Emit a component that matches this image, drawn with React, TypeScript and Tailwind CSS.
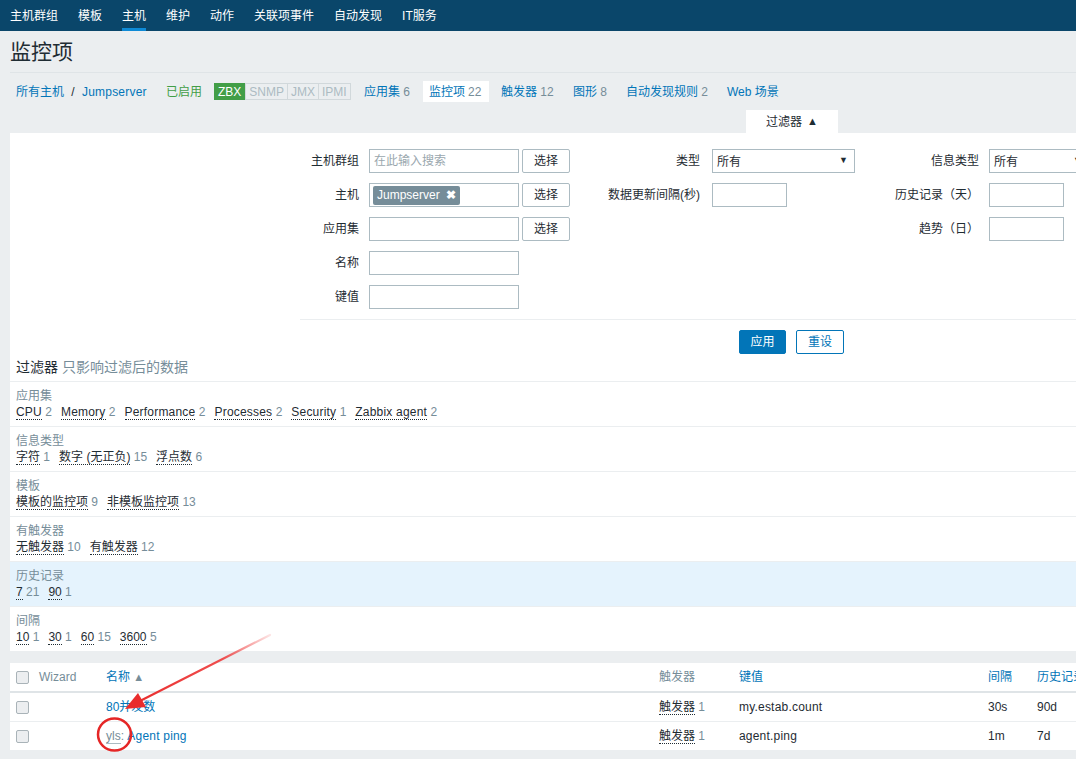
import React from 'react';

const font = "font-['Liberation_Sans','Noto_Sans_CJK_SC',sans-serif]";

const navItems = ['主机群组', '模板', '主机', '维护', '动作', '关联项事件', '自动发现', 'IT服务'];

type Sub = { title: string; items: [string, string][]; active?: boolean };

const subfilters: Sub[] = [
  {
    title: '应用集',
    items: [
      ['CPU', '2'],
      ['Memory', '2'],
      ['Performance', '2'],
      ['Processes', '2'],
      ['Security', '1'],
      ['Zabbix agent', '2'],
    ],
  },
  {
    title: '信息类型',
    items: [
      ['字符', '1'],
      ['数字 (无正负)', '15'],
      ['浮点数', '6'],
    ],
  },
  {
    title: '模板',
    items: [
      ['模板的监控项', '9'],
      ['非模板监控项', '13'],
    ],
  },
  {
    title: '有触发器',
    items: [
      ['无触发器', '10'],
      ['有触发器', '12'],
    ],
  },
  {
    title: '历史记录',
    items: [
      ['7', '21'],
      ['90', '1'],
    ],
    active: true,
  },
  {
    title: '间隔',
    items: [
      ['10', '1'],
      ['30', '1'],
      ['60', '15'],
      ['3600', '5'],
    ],
  },
];

const isLatin = (s: string) => /^[A-Za-z ]+$/.test(s);

function Input({ w, placeholder }: { w: string; placeholder?: string }) {
  return (
    <div className={`${w} h-[24px] border border-[#acbbc2] bg-white flex items-center px-[4px] text-[#9aa7ae]`}>
      {placeholder}
    </div>
  );
}

function Select({ w }: { w: string }) {
  return (
    <div className={`${w} h-[24px] border border-[#acbbc2] bg-white flex items-center justify-between pl-[4px] pr-[6px]`}>
      <span className="pt-[2px]">所有</span>
      <span className="text-[9px] text-[#1f2c33]">▼</span>
    </div>
  );
}

function PickBtn() {
  return (
    <div className="w-[48px] h-[24px] border border-[#acbbc2] rounded-[2px] bg-white flex items-center justify-center">
      选择
    </div>
  );
}

function Label({ children }: { children?: React.ReactNode }) {
  return <div className="text-right">{children}</div>;
}

function Check() {
  return <div className="w-[13px] h-[13px] rounded-[2px] border border-[#a9b3b8] bg-[#eceef0]" />;
}

export default function App() {
  return (
    <div className={`relative w-[1076px] h-[759px] overflow-hidden bg-[#ebeef0] text-[12px] text-[#1f2c33] ${font}`}>
      {/* top menu */}
      <nav className="h-[31px] bg-[#0a466a] flex text-white">
        {navItems.map((n) => (
          <div key={n} className="px-[10px] h-full flex items-center relative">
            {n}
            {n === '主机' && <div className="absolute left-[10px] right-[10px] bottom-0 h-[3px] bg-[#0e8ad6]" />}
          </div>
        ))}
      </nav>

      <div className="w-[1300px]">
        <div className="mx-[10px] h-[42px] border-b border-[#dfe4e7] flex items-center text-[21px] w-[1280px]">
          监控项
        </div>

        {/* breadcrumbs / host tabs */}
        <div className="h-[37px] flex items-center pl-[16px]">
          <div className="w-[150px] text-[#0275b8]">
            所有主机 <span className="text-[#1f2c33] mx-[4px]">/</span> <span className="tracking-[0.2px]">Jumpserver</span>
          </div>
          <div className="w-[48px] text-[#429e47]">已启用</div>
          <div className="w-[150px] flex">
            <span className="h-[17px] px-[3px] flex items-center bg-[#429e47] text-white border border-[#429e47]">ZBX</span>
            <span className="h-[17px] px-[3px] flex items-center text-[#acbbc2] border border-[#d1d8db]">SNMP</span>
            <span className="h-[17px] px-[3px] flex items-center text-[#acbbc2] border border-l-0 border-[#d1d8db]">JMX</span>
            <span className="h-[17px] px-[3px] flex items-center text-[#acbbc2] border border-l-0 border-[#d1d8db]">IPMI</span>
          </div>
          <div className="w-[59px] text-[#0275b8]">
            应用集 <span className="text-[#768d99]">6</span>
          </div>
          <div className="w-[66px] h-[21px] bg-white flex items-center px-[6px] text-[#0275b8]">
            监控项 <span className="text-[#768d99] ml-[3px]">22</span>
          </div>
          <div className="w-[72px] ml-[12px] text-[#0275b8]">
            触发器 <span className="text-[#768d99]">12</span>
          </div>
          <div className="w-[53px] text-[#0275b8]">
            图形 <span className="text-[#768d99]">8</span>
          </div>
          <div className="w-[101px] text-[#0275b8]">
            自动发现规则 <span className="text-[#768d99]">2</span>
          </div>
          <div className="text-[#0275b8]">Web 场景</div>
        </div>

        {/* filter tab */}
        <div className="ml-[746px] w-[92px] h-[23px] bg-white flex items-center justify-center gap-[5px]">
          过滤器 <span className="text-[11px] leading-none">▲</span>
        </div>

        {/* filter panel */}
        <div className="ml-[10px] bg-white">
          <div className="ml-[290px]">
            <div className="pt-[16px] pb-[10px] border-b border-[#ebeef0]">
              <div className="grid grid-cols-[69px_153px_48px_142px_143px_134px_150px] auto-rows-[24px] gap-y-[10px] items-center">
                <div className="pr-[10px]"><Label>主机群组</Label></div>
                <Input w="w-[150px]" placeholder="在此输入搜索" />
                <PickBtn />
                <div className="pr-[12px]"><Label>类型</Label></div>
                <Select w="w-[143px]" />
                <div className="pr-[10px]"><Label>信息类型</Label></div>
                <Select w="w-[100px]" />

                <div className="pr-[10px]"><Label>主机</Label></div>
                <div className="w-[150px] h-[24px] border border-[#acbbc2] bg-white flex items-center px-[3px]">
                  <span className="h-[19px] px-[4px] rounded-[2px] bg-[#768d99] text-white flex items-center gap-[6px]">
                    Jumpserver <span className="text-[12px] font-bold">✖</span>
                  </span>
                </div>
                <PickBtn />
                <div className="pr-[12px]"><Label>数据更新间隔(秒)</Label></div>
                <Input w="w-[75px]" />
                <div className="pr-[10px]"><Label>历史记录（天）</Label></div>
                <Input w="w-[75px]" />

                <div className="pr-[10px]"><Label>应用集</Label></div>
                <Input w="w-[150px]" />
                <PickBtn />
                <div />
                <div />
                <div className="pr-[10px]"><Label>趋势（日）</Label></div>
                <Input w="w-[75px]" />

                <div className="pr-[10px]"><Label>名称</Label></div>
                <Input w="w-[150px]" />
                <div />
                <div />
                <div />
                <div />
                <div />

                <div className="pr-[10px]"><Label>键值</Label></div>
                <Input w="w-[150px]" />
              </div>
            </div>
            <div className="pt-[10px] pl-[439px] flex gap-[10px]">
              <div className="w-[47px] h-[24px] rounded-[2px] bg-[#0275b8] border border-[#0275b8] text-white flex items-center justify-center">
                应用
              </div>
              <div className="w-[48px] h-[24px] rounded-[2px] bg-white border border-[#0275b8] text-[#0275b8] flex items-center justify-center">
                重设
              </div>
            </div>
          </div>

          <div className="h-[28px] flex items-center px-[6px] border-b border-[#ebeef0] text-[14px]">
            过滤器<span className="text-[#768d99] ml-[4px]">只影响过滤后的数据</span>
          </div>

          {subfilters.map((s) => (
            <div
              key={s.title}
              className={`h-[45px] px-[6px] pt-[6px] border-b border-[#ebeef0] ${s.active ? 'bg-[#e5f3fd]' : ''}`}
            >
              <div className="leading-[16px] text-[#768d99]">{s.title}</div>
              <div className="flex gap-x-[9px] leading-[16px]">
                {s.items.map(([name, count]) => (
                  <span key={name}>
                    <span
                      className={`border-b border-dotted border-[#1f2c33] ${isLatin(name) ? 'tracking-[0.2px]' : ''}`}
                    >
                      {name}
                    </span>{' '}
                    <span className="text-[#768d99]">{count}</span>
                  </span>
                ))}
              </div>
            </div>
          ))}
        </div>

        {/* items table */}
        <div className="ml-[10px] mt-[11px] bg-white">
          <div className="grid grid-cols-[23px_67px_553px_80px_249px_49px_80px] h-[30px] items-center border-b-2 border-[#dfe4e7]">
            <div className="pl-[6px]"><Check /></div>
            <div className="pl-[6px] text-[#768d99]">Wizard</div>
            <div className="pl-[6px] text-[#0275b8]">
              名称 <span className="text-[#768d99] text-[11px]">▲</span>
            </div>
            <div className="pl-[6px] text-[#768d99]">触发器</div>
            <div className="pl-[6px] text-[#0275b8]">键值</div>
            <div className="pl-[6px] text-[#0275b8]">间隔</div>
            <div className="pl-[6px] text-[#0275b8] whitespace-nowrap">历史记录</div>
          </div>
          <div className="grid grid-cols-[23px_67px_553px_80px_249px_49px_80px] h-[29px] items-center border-b border-[#ebeef0]">
            <div className="pl-[6px]"><Check /></div>
            <div />
            <div className="pl-[6px] text-[#0275b8]">80并发数</div>
            <div className="pl-[6px]">
              <span className="border-b border-dotted border-[#1f2c33]">触发器</span> <span className="text-[#768d99]">1</span>
            </div>
            <div className="pl-[6px] tracking-[0.2px]">my.estab.count</div>
            <div className="pl-[6px]">30s</div>
            <div className="pl-[6px]">90d</div>
          </div>
          <div className="grid grid-cols-[23px_67px_553px_80px_249px_49px_80px] h-[29px] items-center border-b border-[#ebeef0]">
            <div className="pl-[6px]"><Check /></div>
            <div />
            <div className="pl-[6px]">
              <span className="text-[#768d99] border-b border-[#acbbc2]">yls</span>
              <span className="text-[#768d99]">:</span> <span className="text-[#0275b8] tracking-[0.2px]">Agent ping</span>
            </div>
            <div className="pl-[6px]">
              <span className="border-b border-dotted border-[#1f2c33]">触发器</span> <span className="text-[#768d99]">1</span>
            </div>
            <div className="pl-[6px] tracking-[0.2px]">agent.ping</div>
            <div className="pl-[6px]">1m</div>
            <div className="pl-[6px]">7d</div>
          </div>
        </div>
      </div>

      {/* red annotation marks */}
      <svg className="absolute inset-0 pointer-events-none" width="1076" height="759" viewBox="0 0 1076 759">
        <defs>
          <linearGradient id="arrowFade" x1="270" y1="635" x2="135" y2="704" gradientUnits="userSpaceOnUse">
            <stop offset="0" stopColor="#f04848" stopOpacity="0.15" />
            <stop offset="0.35" stopColor="#ee3b3b" stopOpacity="0.9" />
            <stop offset="1" stopColor="#e92c2c" />
          </linearGradient>
        </defs>
        <line x1="270" y1="635" x2="138" y2="702" stroke="url(#arrowFade)" strokeWidth="2.2" strokeLinecap="round" />
        <polygon points="125,709 146,707 138,693" fill="#e92c2c" />
        <ellipse cx="114.5" cy="734.5" rx="16.5" ry="16" fill="none" stroke="#e52626" strokeWidth="2.5" />
      </svg>
    </div>
  );
}
